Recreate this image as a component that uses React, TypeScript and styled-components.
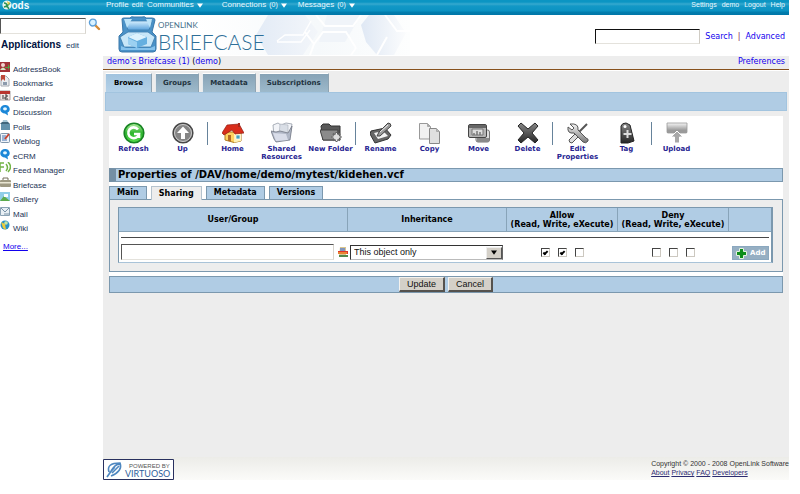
import React from "react";
import styled, { createGlobalStyle, css } from "styled-components";

const verdana = `"DejaVu Sans", Verdana, sans-serif`;
const arial = `"Liberation Sans", Arial, sans-serif`;
const blue = "#b0cce4";
const edge = "#7b98ae";
const link = "#1200ee";

const GlobalStyle = createGlobalStyle`
  *, *::before, *::after { box-sizing: border-box; }
  body { margin: 0; background: #fff; color: #000; font: 8px/12px ${verdana}; }
  a { color: ${link}; text-decoration: none; }
  h1, h2, ul { margin: 0; padding: 0; }
  ul { list-style: none; }
  svg { display: block; flex: none; }
`;

const Page = styled.div`
  display: flex;
  flex-direction: column;
  min-height: calc(100vh - 14px);
  margin-right: 11px;
`;

const TopBar = styled.header`
  display: flex;
  align-items: center;
  height: 15px;
  padding: 0 4px 5px 2px;
  color: #e8f8ff;
  font-family: ${arial};
  line-height: 10px;
  background: linear-gradient(#0b95c3 0 2px, #36a9cf 4px, #1298c6 6px, #0b92c2 11px, #027eae 12px, #0076a8 15px);
  a { color: inherit; }
`;
const Brand = styled.a`
  width: 104px;
`;
const MainNav = styled.nav`
  display: flex;
  flex: 1;
  align-items: center;
  small { font-size: 7px; }
`;
const NavItem = styled.a<{ $gap: number }>`
  display: flex;
  align-items: center;
  gap: 3px;
  margin-right: ${(p) => p.$gap}px;
`;
const UserNav = styled.nav`
  display: flex;
  gap: 5px;
  font-size: 7px;
  line-height: 8px;
`;

const Body = styled.div`
  display: grid;
  flex: 1;
  grid-template-columns: 103px minmax(0, 1fr);
`;

const Sidebar = styled.aside`
  font-family: ${arial};
`;
const SideSearch = styled.form`
  display: flex;
  align-items: flex-start;
  gap: 2px;
  padding-top: 3px;
`;
const Field = styled.input`
  height: 16px;
  min-width: 0;
  padding: 0 3px;
  border: 1px solid;
  border-color: #555 #d8d5cf #e4e2dc #555;
  border-radius: 0;
  outline: 0;
  background: #fff;
  font: 9px ${arial};
`;
const SideField = styled(Field)`
  width: 86px;
`;
const PlainButton = styled.button`
  padding: 0;
  border: 0;
  background: none;
`;
const SideHeading = styled.div`
  display: flex;
  align-items: baseline;
  gap: 5px;
  margin: 5px 0 9px 1px;
  h2 { font-size: 10px; line-height: 12px; color: #001240; }
  a { font-size: 8px; color: #16385f; }
`;
const AppItem = styled.li`
  height: 14px;
  &:nth-child(even) { height: 15px; }
  a {
    display: flex;
    align-items: flex-start;
    gap: 2px;
    color: #1c3355;
    line-height: 17px;
  }
`;
const More = styled.a`
  display: inline-block;
  margin: 6px 0 0 3px;
  font-size: 8px;
  text-decoration: underline;
`;

const Main = styled.main`
  display: flex;
  flex-direction: column;
`;
const Banner = styled.div`
  display: flex;
  justify-content: space-between;
  height: 41px;
  padding-right: 4px;
`;
const Search = styled.form`
  display: flex;
  align-items: center;
  gap: 5px;
  height: 43px;
  b { color: #802050; font-weight: 400; }
`;
const SearchField = styled(Field)`
  width: 105px;
  height: 15px;
  border-color: #111 #d0ccc4 #e4e2dc #111;
`;
const LinkButton = styled(PlainButton)`
  color: ${link};
  font: 8px/12px ${verdana};
`;
const Crumbs = styled.div`
  display: flex;
  justify-content: space-between;
  padding: 0 4px 1px;
  background: #ededed;
  border-bottom: 1px solid #87511d;
`;
const Workspace = styled.div`
  flex: 1;
  padding: 2px 2px 0;
  border-top: 1px solid #fff;
  background: #ededed;
`;
const MainTabs = styled.nav`
  display: flex;
  gap: 3px;
`;
const MainTab = styled.a<{ $active?: boolean }>`
  padding: 0 7px;
  border: solid;
  border-width: 1px 1px 0;
  border-color: #fff #8fa3b1 #8fa3b1 #e6eaee;
  background: ${(p) => (p.$active ? "linear-gradient(#a1c3de, #b4d1e8)" : "linear-gradient(#87a3b6, #9db9cb)")};
  color: ${(p) => (p.$active ? "#000" : "#22333f")};
  font-size: 7px;
  font-weight: 700;
  line-height: 18px;
  &:first-child { padding: 0 8px; }
`;
const Strip = styled.div`
  height: 19px;
  border: 1px solid #a2c4df;
  background: ${blue};
`;
const Sheet = styled.section`
  margin: 5px 4px 0;
  background: #fff;
`;
const Toolbar = styled.div`
  display: flex;
  align-items: flex-start;
  height: 52px;
  padding-top: 6px;
`;
const Tool = styled.button`
  display: flex;
  flex: 0 0 49px;
  flex-direction: column;
  align-items: center;
  gap: 0;
  padding: 0;
  border: 0;
  background: none;
  color: #262391;
  font: 700 7px/8px ${verdana};
`;
const ToolSeparator = styled.span`
  flex: 0 0 1px;
  height: 23px;
  background: #66839b;
`;
const Title = styled.h1`
  height: 14px;
  padding-left: 2px;
  border: 1px solid ${edge};
  border-left: 7px solid #748fa4;
  background: ${blue};
  font-size: 10px;
  line-height: 12px;
`;
const PanelTabs = styled.div`
  display: flex;
  gap: 4px;
  margin-top: 4px;
`;
const PanelTab = styled.button<{ $active?: boolean }>`
  height: 13px;
  margin-bottom: ${(p) => (p.$active ? "-1px" : 0)};
  padding: 0 7px;
  border: 1px solid ${edge};
  border-bottom: 0;
  background: ${(p) => (p.$active ? "#ededed" : blue)};
  color: #000;
  font: 700 8px/12px ${verdana};
  ${(p) => p.$active && css`height: 14px; border-color: #b5c3ce; z-index: 1;`}
`;
const Panel = styled.div`
  padding: 7px 9px 8px 8px;
  border: 1px solid ${edge};
  background: #ededed;
`;
const Acl = styled.table`
  width: 100%;
  table-layout: fixed;
  border-collapse: separate;
  border-spacing: 0;
  border: 1px solid ${edge};
  border-right-width: 2px;
  border-bottom-color: #a9c3d8;
  background: #fff;
  td, th { padding: 0; }
  th {
    height: 24px;
    border-right: 1px solid #88a4b9;
    border-bottom: 1px solid #88a4b9;
    background: ${blue};
    font-size: 8px;
    line-height: 9px;
    white-space: nowrap;
  }
  th:last-child { border-right: 0; }
  td { vertical-align: middle; }
`;
const Col = styled.col<{ $w?: number }>`
  width: ${(p) => (p.$w ? `${p.$w}px` : "auto")};
`;
const Rule = styled.hr`
  height: 1px;
  margin: 5px 2px 6px;
  border: 0;
  background: #484848;
`;
const UserCell = styled.div`
  display: flex;
  align-items: center;
  gap: 4px;
  padding: 0 0 2px 2px;
`;
const UserField = styled(Field)`
  flex: 1;
`;
const SelectBox = styled.div`
  display: grid;
  grid-template-columns: minmax(0, 1fr) 16px;
  align-items: center;
  margin: 0 4px 1px 2px;
  border: 1px solid;
  border-color: #333 #666 #bbb #333;
  background: #fff;
  select {
    grid-area: 1 / 1 / 2 / 3;
    height: 13px;
    padding: 0 3px;
    border: 0;
    outline: 0;
    appearance: none;
    background: none;
    color: #111;
    font: 9px/13px ${arial};
  }
`;
const Arrow = styled.span`
  display: grid;
  grid-area: 1 / 2;
  place-items: center;
  height: 12px;
  border: 1px solid;
  border-color: #eee #555 #555 #eee;
  background: #d4d0c8;
  pointer-events: none;
`;
const Checks = styled.div`
  display: flex;
  justify-content: center;
  gap: 8px;
  padding-bottom: 1px;
`;
const Check = styled.input`
  display: grid;
  place-items: center;
  width: 9px;
  height: 9px;
  margin: 0;
  appearance: none;
  border: 1px solid;
  border-color: #444 #ccc8c0 #ccc8c0 #444;
  background: #fff;
  &:checked::before {
    content: "";
    width: 5px;
    height: 3px;
    border: solid #000;
    border-width: 0 0 2px 2px;
    transform: rotate(-45deg);
  }
`;
const AddButton = styled.button`
  display: flex;
  align-items: center;
  gap: 3px;
  width: 37px;
  height: 14px;
  margin: 0 2px 0 auto;
  padding: 0 3px;
  border: 1px solid #8ba8bf;
  background: #96afc3;
  color: #fff;
  font: 700 7px/12px ${verdana};
`;
const Actions = styled.div`
  display: flex;
  justify-content: center;
  gap: 3px;
  height: 17px;
  margin-top: 4px;
  border: 1px solid ${edge};
  background: ${blue};
`;
const Push = styled.button`
  height: 15px;
  padding: 0 7px;
  border: solid;
  border-width: 1px 2px 2px 1px;
  border-color: #f4f2ee #55524e #55524e #f4f2ee;
  background: #d4d0c8;
  color: #111;
  font: 9px/12px ${arial};
`;
const Footer = styled.footer`
  display: flex;
  justify-content: space-between;
  padding: 2px 0 0;
  height: 23px;
  background: linear-gradient(#ecece8, #fbfbf9);
  color: #333;
  font: 7px/9px ${arial};
  a { color: #2b2b70; text-decoration: underline; }
`;

const Defs = () => (
  <svg width="0" height="0" aria-hidden="true">
    <defs>
      <linearGradient id="metal" x2="0" y2="1"><stop stopColor="#f5f5f5" /><stop offset="1" stopColor="#777" /></linearGradient>
      <linearGradient id="dark" x2="0" y2="1"><stop stopColor="#888" /><stop offset="1" stopColor="#262626" /></linearGradient>
      <linearGradient id="sky" x2="0" y2="1"><stop stopColor="#d6efff" /><stop offset="1" stopColor="#5aa2dc" /></linearGradient>
      <linearGradient id="leaf" x2="0" y2="1"><stop stopColor="#b6f0a4" /><stop offset=".5" stopColor="#2fb52f" /><stop offset="1" stopColor="#55dd4c" /></linearGradient>
    </defs>
  </svg>
);

const Caret = ({ size = 6, fill = "#fff" }: { size?: number; fill?: string }) => (
  <svg width={size} height={size - 1} viewBox="0 0 6 5"><path d="M0 .5h6L3 4.8z" fill={fill} /></svg>
);

const OdsLogo = () => (
  <svg width="28" height="11" viewBox="0 0 28 11">
    <circle cx="5" cy="5" r="4.6" fill="#e9f5ee" />
    <path d="M2 3q3 0 3 3l3-3M2 7l3-1 2 3" stroke="#2d9354" strokeWidth="1.5" fill="none" />
    <path d="M5 1l3 2-2 2z" fill="#e8c93c" />
    <text x="9.5" y="9" fontFamily="Liberation Sans" fontWeight="700" fontSize="10" fill="#f3fbff">ods</text>
  </svg>
);

const Magnifier = () => (
  <svg width="13" height="13" viewBox="0 0 13 13">
    <path d="M7 7l4 4" stroke="#d58b36" strokeWidth="2.4" strokeLinecap="round" />
    <circle cx="4.8" cy="4.6" r="3.4" fill="#d9f2ff" stroke="#5c9fd8" strokeWidth="1.3" />
  </svg>
);

const BriefcaseBanner = () => (
  <svg width="307" height="40" viewBox="0 0 307 40" role="img" aria-label="OpenLink Briefcase">
    <defs>
      <linearGradient id="hex"><stop stopColor="#e3ebf6" /><stop offset="1" stopColor="#f3f6fa" /></linearGradient>
      <linearGradient id="fade"><stop offset=".3" stopColor="#fff" /><stop offset=".7" stopColor="#f6f9fb" /><stop offset="1" stopColor="#fdfefe" /></linearGradient>
      <linearGradient id="hexRight"><stop stopColor="#dfe8f4" /><stop offset="1" stopColor="#fbfcfd" /></linearGradient>
    </defs>
    <path d="M0 0h307v40H0z" fill="url(#fade)" />
    <path d="M165 0h37l13 17-15 23h-35l-12-20z" fill="url(#hex)" />
    <path d="M174 26l8-6h18l8-14M174 27h24l9-12" stroke="#fff" strokeWidth="1.5" fill="none" />
    <path d="M224 0h34l-16 27h-26z" fill="#f0f4f9" />
    <path d="M258 10l8-10h25l12 18-12 22h-17l-11-13z" fill="url(#hexRight)" />
    <path d="M213 0l9 11h28l8-11M211 29l9-12h23l10 16M253 33l-5 7M202 17l9 12-4 11M282 0l12 16h13M274 40l10-18" stroke="#fff" strokeWidth="2" fill="none" />
    <g stroke="#3a78aa" strokeLinejoin="round">
      <path d="M19 4q0-1 2-1h6q1-2 4-1h8q3-1 4 1h6q3 0 3 2l-3 12 4 4v13q0 3-3 3H19q-3 0-3-3V21l4-4z" fill="#4a92c8" />
      <path d="M22 6h27l-3 9H25z" fill="url(#sky)" strokeWidth=".7" />
      <path d="M17 22l8-5h20l7 5-4 10H21z" fill="#c7e6f8" strokeWidth=".8" />
    </g>
    <path d="M25 22l9-4 10 4v7l-10 4-9-4z" fill="#65afe0" />
    <path d="M25 22l9-4 10 4-10 4z" fill="#dcf2fd" />
    <path d="M25 23l9 4v6l-9-4z" fill="#9bd0f1" />
    <path d="M18 31l5 2h24l5-2v4H18z" fill="#86c2ec" />
    <path d="M21 4h8l-5 9zM43 4h6l-2 9z" fill="#bce4fa" />
    <text x="55" y="13" fontFamily="Lato" fontSize="8" fill="#47718b">OPENLINK</text>
    <text x="55" y="35" fontFamily="Lato" fontWeight="300" fontSize="21" fill="#2f6f98">BRIEFCASE</text>
  </svg>
);

const Bubble = ({ a = "#1b87d8" }: { a?: string }) => (
  <><path d="M5 1a4.5 4 0 100 8.500l3 2-.5-3A4 4 0 005 1z" fill={a} /><ellipse cx="5" cy="4.800" rx="2" ry="1.600" fill="#e4f6ff" /></>
);
const appIcons: Record<string, React.ReactNode> = {
  AddressBook: <><path d="M0 1h10v10H0z" fill="#a33238" /><circle cx="3" cy="4" r="2" fill="#f3d5d0" /><path d="M0 9q3-5 6 0z" fill="#d4e5c0" /><path d="M5 6h3V3l2 3-2 3V7H5z" fill="#56a044" /></>,
  Bookmarks: <><path d="M1 1h5l3 3v7H1z" fill="#eceef1" stroke="#a5aab2" /><path d="M1 0h4v6L3 4 1 6z" fill="#bd4739" /><path d="M3 7h4v3H3z" fill="#8c9bad" /></>,
  Calendar: <><path d="M0 1h10v9H0z" fill="#f3e9e6" stroke="#a7a0a0" /><path d="M0 1h10v3H0z" fill="#b9352d" /><path d="M3 5v4M5 5h2v2H5v2h3" stroke="#333" fill="none" /></>,
  Discussion: <Bubble />,
  Polls: <><path d="M1 5h9v6H1z" fill="#6492ab" /><path d="M3 1h4l2 4H2z" fill="#a8c7d5" /><path d="M0 5l2-2h6l2 2z" fill="#42677c" /></>,
  Weblog: <><rect x=".5" y=".5" width="9" height="9" rx="1" fill="#eff4fa" stroke="#8197ac" /><path d="M2 3h4M2 5h4M2 7h5" stroke="#4772ae" /><path d="M5 6l4-5" stroke="#c8432f" strokeWidth="2" /></>,
  eCRM: <Bubble />,
  "Feed Manager": <path d="M0 10V1h4M0 5h4M6 2q3 3.500 0 7M8 0q5 5 0 10" stroke="#73b446" strokeWidth="1.500" fill="none" />,
  Briefcase: <><rect y="3" width="11" height="7" rx="1" fill="#9f9a83" /><path d="M3 3V1h5v2" stroke="#756f5b" fill="none" /><path d="M0 5h11v1.500H0z" fill="#e9e6d3" /></>,
  Gallery: <><path d="M0 1h10v9H0z" fill="#91cee8" /><path d="M0 10l4-5 6 5z" fill="#5cab4b" /><path d="M4 3h4v3H4z" fill="#f8fdff" /></>,
  Mail: <><path d="M.5 1.500h9v8h-9z" fill="#e8eff4" stroke="#8ba3b4" /><path d="M1 2l4 4 4-4M4 8h6" stroke="#7993a7" fill="none" /></>,
  Wiki: <><circle cx="5" cy="5" r="4.500" fill="#2a92ca" /><path d="M1 2l4 2 1 6-3-2z" fill="#eecb38" /><circle cx="6" cy="3" r="1.800" fill="#c6e7a2" /></>,
};

const toolIcons: Record<string, React.ReactNode> = {
  Refresh: <><circle cx="11" cy="11" r="9.800" fill="url(#leaf)" stroke="#178422" strokeWidth="1.600" /><path d="M15 7.500A5.400 5.400 0 1016 12h-5m5-.7v4.700" stroke="#fff" strokeWidth="2.600" fill="none" /></>,
  Up: <><circle cx="11" cy="11" r="9.800" fill="#858585" stroke="#484848" strokeWidth="1.600" /><circle cx="11" cy="11" r="8.500" fill="none" stroke="#ccc" /><path d="M11 4.500l6 6.500h-4v6H9v-6H5z" fill="#fff" /></>,
  Home: <><path d="M3 10h16v9l-7 1.500L3 18z" fill="#ffd260" stroke="#af7a20" /><path d="M12 11h7v8l-7 1.500z" fill="#fff1b5" /><path d="M0 11l5-8 12-1 5 9-9 1-3-4-8 5z" fill="#d92d1b" stroke="#911c13" strokeWidth=".7" /><path d="M6 13h3v6H6z" fill="#b46a25" /><path d="M14 13h4v4h-4z" fill="#46a2bc" stroke="#fff" strokeWidth=".7" /><path d="M16 1h2v4h-2z" fill="#a52a1d" /></>,
  "Shared Resources": <><path d="M2 3l5-2 3 2 5-2 6 1-2 12H3z" fill="#f2f4f8" stroke="#969da8" strokeWidth=".8" /><path d="M9 2l8 1v10H8z" fill="#d9dee6" stroke="#a9b0bb" strokeWidth=".6" /><path d="M0 9l5 1 4-1 8 2 4-7-2 14-14 2-2-3z" fill="#b0b7c6" stroke="#737985" strokeWidth=".8" /><path d="M2 11l13 1 2 6-12 1z" fill="#d9dde9" /></>,
  "New Folder": <><path d="M1 4l2-2h6l2 2h9v14H3z" fill="#595959" stroke="#333" /><path d="M0 8h18l-1 10H3z" fill="#8b8b8b" stroke="#444" /><path d="M16.500 10v10M11.500 15h10M13 11.500l7 7M20 11.500l-7 7" stroke="#666" strokeWidth="2" /><path d="M16.500 11v8M12.500 15h8" stroke="#eee" /><circle cx="16.500" cy="15" r="2.800" fill="#ddd" /></>,
  Rename: <><path d="M1 9l14-3 6 7-3 4-13 4-5-9z" fill="#666" stroke="#333" /><path d="M4 11l9-2 5 5-10 3z" fill="#f4f4f4" /><path d="M7 14l2-4L18 1q3 0 3 3L10 14z" fill="#9a9a9a" stroke="#444" /><path d="M10 10l8-7" stroke="#eee" /></>,
  Copy: <><path d="M.5 1.500h8l3 3V17H.5z" fill="#f1f1f1" stroke="#999" /><path d="M8.500 1.500v3h3" fill="#aaa" stroke="#aaa" /><path d="M10.500 6.500h7l3 3v12h-10z" fill="#e0e0e0" stroke="#888" /><path d="M17.500 6.500v3h3" fill="#bbb" stroke="#aaa" /></>,
  Move: <><rect x="8" y="8" width="13.500" height="12" rx="2" fill="#ddd" stroke="#777" /><path d="M9 16h12v4H9z" fill="#8a8a8a" /><rect x=".5" y="2.500" width="18" height="13" rx="1.500" fill="#b5b5b5" stroke="#444" /><path d="M1 3h17v3H1z" fill="#666" /><path d="M4 7h11v6H4z" fill="#ddd" stroke="#777" /><path d="M6 13v-2m3 2V9m3 4v-3" stroke="#777" strokeWidth="1.500" /></>,
  Delete: <path d="M4 1l7 6 7-6 3 3-6 7 6 7-3 3-7-6-7 6-3-3 6-7-6-7z" fill="url(#dark)" stroke="#252525" strokeLinejoin="round" />,
  "Edit Properties": <><path d="M20 2L7 15" stroke="#555" strokeWidth="2" /><path d="M8 12L2 18q0 3 3 3l6-6z" fill="#ddd" stroke="#555" /><path d="M3 2l4 4-2 2-4-3q-1 7 6 6l9 9q3 2 5-1 1-2-2-3l-8-8q1-7-8-6z" fill="url(#metal)" stroke="#555" /></>,
  Tag: <><path d="M5 4q1-3 5-3l4 2 4 16-6 2H5z" fill="url(#dark)" stroke="#222" /><circle cx="9" cy="4.500" r="1.500" fill="#fff" /><path d="M11.500 8v8M7.500 12h8" stroke="#ddd" strokeWidth="2" /></>,
  Upload: <><path d="M1 1h20v9q0 1-1 1H2q-1 0-1-1z" fill="url(#metal)" stroke="#999" strokeWidth=".8" /><path d="M1 8h20v3H1z" fill="#9a9a9a" /><path d="M11 9l6 6h-3.500v6h-5v-6H5z" fill="#a8a8a8" stroke="#fff" /></>,
};

const Virtuoso = () => (
  <svg width="71" height="21" viewBox="0 0 71 21" role="img" aria-label="Powered by Virtuoso">
    <path d="M.5.5h70v20H.5z" fill="#fff" stroke="#28305f" />
    <path d="M6 13Q3 4 17 4q3 8-9 13M8 12Q12 5 17 5M9 14l7-7M4 18q3-5 8-10" stroke="#4e87c0" strokeWidth="1.600" fill="none" />
    <text x="26" y="9" fontFamily="Liberation Sans" fontSize="6" fill="#555">POWERED BY</text>
    <text x="22" y="18" fontFamily="Lato" fontSize="9" fill="#2f629d">VIRTUOSO</text>
  </svg>
);

const tools = ["Refresh", "Up", "|", "Home", "Shared Resources", "New Folder", "|", "Rename", "Copy", "Move", "Delete", "|", "Edit Properties", "Tag", "|", "Upload"];

const Permissions = ({ name, on }: { name: string; on: boolean[] }) => (
  <Checks>
    {["read", "write", "execute"].map((p, i) => (
      <Check key={p} type="checkbox" aria-label={`${name} ${p}`} defaultChecked={on[i]} />
    ))}
  </Checks>
);

export default function App() {
  return (
    <Page>
      <GlobalStyle />
      <TopBar>
        <Brand href="#" aria-label="ods"><OdsLogo /></Brand>
        <MainNav>
          <NavItem href="#" $gap={4}>Profile <small>edit</small></NavItem>
          <NavItem href="#" $gap={19}>Communities <Caret /></NavItem>
          <NavItem href="#" $gap={11}>Connections <small>(0)</small> <Caret /></NavItem>
          <NavItem href="#" $gap={0}>Messages <small>(0)</small> <Caret /></NavItem>
        </MainNav>
        <UserNav>
          <a href="#">Settings</a><a href="#">demo</a><a href="#">Logout</a><a href="#">Help</a>
        </UserNav>
      </TopBar>
      <Body>
        <Sidebar>
          <SideSearch>
            <SideField type="text" aria-label="Search applications" />
            <PlainButton type="button" aria-label="Search"><Magnifier /></PlainButton>
          </SideSearch>
          <SideHeading><h2>Applications</h2><a href="#">edit</a></SideHeading>
          <ul>
            {Object.keys(appIcons).map((name) => (
              <AppItem key={name}>
                <a href="#"><svg width="11" height="12" viewBox="0 0 11 12">{appIcons[name]}</svg>{name}</a>
              </AppItem>
            ))}
          </ul>
          <More href="#">More...</More>
        </Sidebar>
        <Main>
          <Banner>
            <BriefcaseBanner />
            <Search>
              <SearchField type="text" aria-label="Search briefcase" />
              <LinkButton type="button">Search</LinkButton><b>|</b><a href="#">Advanced</a>
            </Search>
          </Banner>
          <Crumbs>
            <span><a href="#">demo's Briefcase (1)</a> (<a href="#">demo</a>)</span>
            <a href="#">Preferences</a>
          </Crumbs>
          <Workspace>
            <MainTabs>
              <MainTab href="#" $active>Browse</MainTab>
              <MainTab href="#">Groups</MainTab>
              <MainTab href="#">Metadata</MainTab>
              <MainTab href="#">Subscriptions</MainTab>
            </MainTabs>
            <Strip />
            <Sheet>
              <Toolbar>
                {tools.map((t, i) => t === "|" ? <ToolSeparator key={i} /> : (
                  <Tool key={t} type="button">
                    <svg width="22" height="23" viewBox="0 0 22 23">{toolIcons[t]}</svg>
                    {t}
                  </Tool>
                ))}
              </Toolbar>
              <Title>Properties of /DAV/home/demo/mytest/kidehen.vcf</Title>
              <PanelTabs role="tablist">
                <PanelTab role="tab">Main</PanelTab>
                <PanelTab role="tab" aria-selected $active>Sharing</PanelTab>
                <PanelTab role="tab">Metadata</PanelTab>
                <PanelTab role="tab">Versions</PanelTab>
              </PanelTabs>
              <Panel>
                <Acl>
                  <colgroup><Col /><Col $w={159} /><Col $w={111} /><Col $w={111} /><Col $w={42} /></colgroup>
                  <thead>
                    <tr>
                      <th>User/Group</th>
                      <th>Inheritance</th>
                      <th>Allow<br />(Read, Write, eXecute)</th>
                      <th>Deny<br />(Read, Write, eXecute)</th>
                      <th aria-label="Action" />
                    </tr>
                  </thead>
                  <tbody>
                    <tr><td colSpan={5}><Rule /></td></tr>
                    <tr>
                      <td>
                        <UserCell>
                          <UserField type="text" aria-label="User or group" />
                          <PlainButton type="button" aria-label="Pick user">
                            <svg width="10" height="12" viewBox="0 0 10 12"><path d="M2 1h6v10H1z" fill="#d9c58e" /><path d="M2 2h5v3H2z" fill="#8195bd" /><path d="M0 5h10v3H0z" fill="#e03429" /><path d="M0 6.500h9v1H0z" fill="#f4d53b" /><path d="M1 9h9v2H1z" fill="#54884b" /></svg>
                          </PlainButton>
                        </UserCell>
                      </td>
                      <td>
                        <SelectBox>
                          <select aria-label="Inheritance"><option>This object only</option></select>
                          <Arrow><Caret size={6} fill="#000" /></Arrow>
                        </SelectBox>
                      </td>
                      <td><Permissions name="Allow" on={[true, true, false]} /></td>
                      <td><Permissions name="Deny" on={[false, false, false]} /></td>
                      <td>
                        <AddButton type="button">
                          <svg width="11" height="11" viewBox="0 0 11 11"><path d="M3.500.5h4v3h3v4h-3v3h-4v-3h-3v-4h3z" fill="#0b8c1a" stroke="#e3f2df" /></svg>
                          Add
                        </AddButton>
                      </td>
                    </tr>
                  </tbody>
                </Acl>
              </Panel>
              <Actions><Push type="button">Update</Push><Push type="button">Cancel</Push></Actions>
            </Sheet>
          </Workspace>
          <Footer>
            <a href="#"><Virtuoso /></a>
            <div>Copyright © 2000 - 2008 OpenLink Software<br /><a href="#">About</a> <a href="#">Privacy</a> <a href="#">FAQ</a> <a href="#">Developers</a></div>
          </Footer>
        </Main>
      </Body>
      <Defs />
    </Page>
  );
}
